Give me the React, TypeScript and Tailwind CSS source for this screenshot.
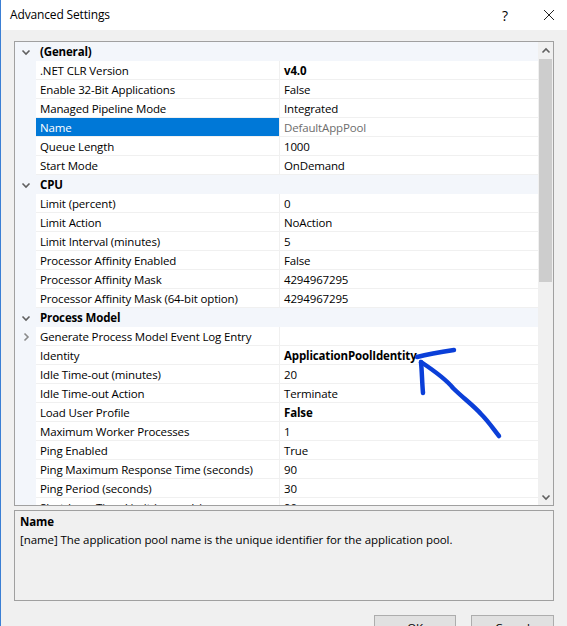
import type { JSX } from 'react';

type Row =
  | { kind: 'cat'; label: string }
  | { kind: 'prop'; label: string; value?: string; bold?: boolean; selected?: boolean; expandable?: boolean };

const ROWS: Row[] = [
  { kind: 'cat', label: '(General)' },
  { kind: 'prop', label: '.NET CLR Version', value: 'v4.0', bold: true },
  { kind: 'prop', label: 'Enable 32-Bit Applications', value: 'False' },
  { kind: 'prop', label: 'Managed Pipeline Mode', value: 'Integrated' },
  { kind: 'prop', label: 'Name', value: 'DefaultAppPool', selected: true },
  { kind: 'prop', label: 'Queue Length', value: '1000' },
  { kind: 'prop', label: 'Start Mode', value: 'OnDemand' },
  { kind: 'cat', label: 'CPU' },
  { kind: 'prop', label: 'Limit (percent)', value: '0' },
  { kind: 'prop', label: 'Limit Action', value: 'NoAction' },
  { kind: 'prop', label: 'Limit Interval (minutes)', value: '5' },
  { kind: 'prop', label: 'Processor Affinity Enabled', value: 'False' },
  { kind: 'prop', label: 'Processor Affinity Mask', value: '4294967295' },
  { kind: 'prop', label: 'Processor Affinity Mask (64-bit option)', value: '4294967295' },
  { kind: 'cat', label: 'Process Model' },
  { kind: 'prop', label: 'Generate Process Model Event Log Entry', expandable: true },
  { kind: 'prop', label: 'Identity', value: 'ApplicationPoolIdentity', bold: true },
  { kind: 'prop', label: 'Idle Time-out (minutes)', value: '20' },
  { kind: 'prop', label: 'Idle Time-out Action', value: 'Terminate' },
  { kind: 'prop', label: 'Load User Profile', value: 'False', bold: true },
  { kind: 'prop', label: 'Maximum Worker Processes', value: '1' },
  { kind: 'prop', label: 'Ping Enabled', value: 'True' },
  { kind: 'prop', label: 'Ping Maximum Response Time (seconds)', value: '90' },
  { kind: 'prop', label: 'Ping Period (seconds)', value: '30' },
  { kind: 'prop', label: 'Shutdown Time Limit (seconds)', value: '90' },
];

function Chevron({ dir }: { dir: 'down' | 'right' | 'up' }): JSX.Element {
  const d =
    dir === 'down' ? 'M1.5 3.5 L5 7 L8.5 3.5' : dir === 'up' ? 'M1.5 6.5 L5 3 L8.5 6.5' : 'M3.5 1.5 L7 5 L3.5 8.5';
  return (
    <svg width="10" height="10" viewBox="0 0 10 10" fill="none">
      <path d={d} stroke={dir === 'right' ? '#8a8a8a' : '#606060'} strokeWidth="1.6" />
    </svg>
  );
}

function GridRow({ row }: { row: Row }): JSX.Element {
  if (row.kind === 'cat') {
    return (
      <div className="flex h-[19px] items-center bg-[#f3f6fb]">
        <div className="flex w-[21px] justify-center">
          <Chevron dir="down" />
        </div>
        <span className="pl-[4px] pt-[1px] font-bold">{row.label}</span>
      </div>
    );
  }
  return (
    <div className="flex h-[19px]">
      <div className="flex w-[21px] items-center justify-center bg-[#f3f6fb]">
        {row.expandable && <Chevron dir="right" />}
      </div>
      <div
        className={`flex w-[243px] items-center border-b border-[#f0f0f0] pl-[4px] pt-[1px] ${
          row.selected ? 'bg-[#0078d7] text-white' : 'bg-white'
        }`}
      >
        {row.label}
      </div>
      <div
        className={`flex flex-1 items-center border-b border-l border-[#f0f0f0] bg-white pl-[4px] pt-[1px] ${
          row.bold ? 'font-bold' : ''
        } ${row.selected ? 'text-[#6d6d6d]' : 'text-black'}`}
      >
        {row.value}
      </div>
    </div>
  );
}

export default function App(): JSX.Element {
  return (
    <div
      className="relative flex h-[626px] w-[567px] flex-col overflow-hidden border-l border-[#3b7fd4] bg-[#f0f0f0] text-[11.5px] tracking-[-0.15px] text-black"
      style={{ fontFamily: '"Segoe UI", "Open Sans", "Noto Sans", sans-serif' }}
    >
      {/* title bar */}
      <div className="flex h-[30px] shrink-0 items-center bg-white pl-[9px]">
        <span className="flex-1 text-[12px]">Advanced Settings</span>
        <span className="w-[20px] text-center text-[14px]">?</span>
        <span className="ml-[28px] mr-[4px] w-[20px] text-center">
          <svg width="12" height="12" viewBox="0 0 12 12">
            <path d="M1 1 L11 11 M11 1 L1 11" stroke="#222" strokeWidth="1" />
          </svg>
        </span>
      </div>

      <div className="flex flex-col px-[13px] pt-[11px]">
        {/* property grid */}
        <div className="flex h-[465px] border border-[#a0a0a0] bg-white">
          <div className="flex-1 overflow-hidden">
            {ROWS.map((r, i) => (
              <GridRow key={i} row={r} />
            ))}
          </div>
          <div className="flex w-[15px] flex-col bg-[#f0f0f0]">
            <div className="flex h-[17px] items-center justify-center">
              <Chevron dir="up" />
            </div>
            <div className="mx-[1px] h-[223px] bg-[#cdcdcd]" />
            <div className="flex-1" />
            <div className="flex h-[17px] items-center justify-center">
              <Chevron dir="down" />
            </div>
          </div>
        </div>

        {/* description */}
        <div className="mt-[4px] h-[91px] border border-[#a0a0a0] px-[5px] pt-[2px]">
          <div className="font-bold">Name</div>
          <div className="mt-[1px] tracking-[-0.07px]">
            [name] The application pool name is the unique identifier for the application pool.
          </div>
        </div>

        {/* buttons */}
        <div className="mt-[14px] flex justify-end gap-[15px]">
          <button className="h-[23px] w-[82px] border border-[#adadad] bg-[#e1e1e1] pt-[3px]">OK</button>
          <button className="h-[23px] w-[83px] border border-[#adadad] bg-[#e1e1e1] pt-[3px]">Cancel</button>
        </div>
      </div>

      {/* pen annotation */}
      <svg className="pointer-events-none absolute left-0 top-0" width="567" height="626" viewBox="0 0 567 626">
        <g stroke="#0b3fd8" strokeWidth="4.5" strokeLinecap="round" strokeLinejoin="round" fill="none">
          <path d="M416 357 C428 354 440 352 453 350" />
          <path d="M420 362 C421 372 421 382 422 393" />
          <path d="M420 362 C432 370 444 378 452 388 C462 398 472 405 480 414 C488 422 493 430 498 436" />
        </g>
      </svg>
    </div>
  );
}
